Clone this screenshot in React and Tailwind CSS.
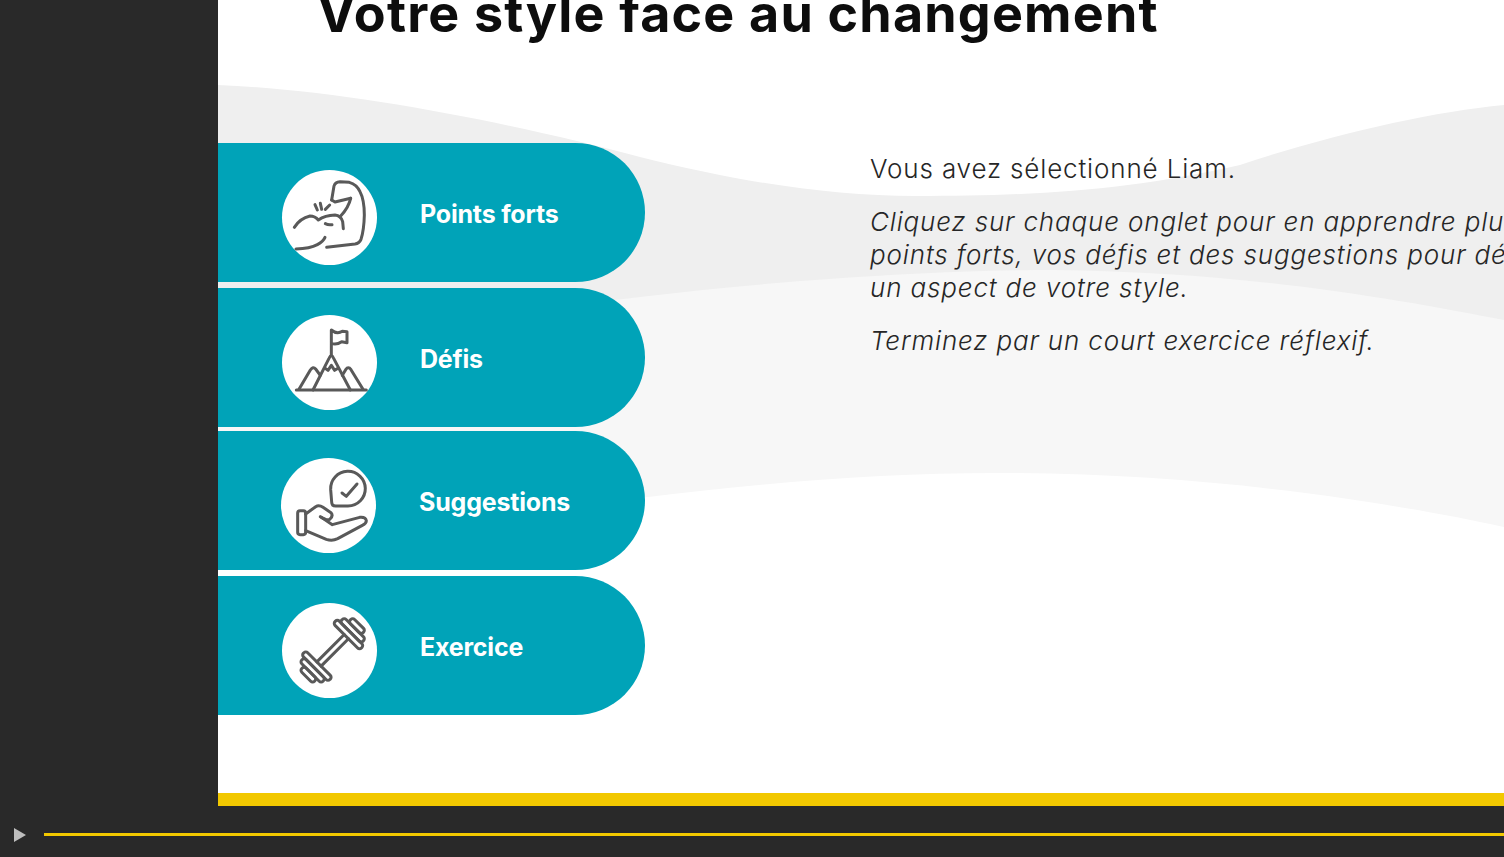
import React from "react";

const MuscleIcon = () => (
  <svg viewBox="66 60 285 285" className="w-full h-full" fill="none" stroke="#595959" strokeWidth="9" strokeLinecap="round" strokeLinejoin="round">
    <path d="M215 150 L222 108 Q225 96 240 95 L268 97 Q290 103 300 125 Q313 150 313 195 Q312 240 303 268 Q298 280 285 282 L200 292" />
    <path d="M215 150 L225 156 L272 145" />
    <path d="M272 145 Q266 172 242 198" />
    <path d="M103 232 Q120 205 150 198 Q165 198 175 210 Q195 196 225 195 Q243 197 248 215 L250 236" />
    <path d="M108 297 Q150 296 172 284 Q190 274 195 262" />
    <path d="M196 221 Q205 226 216 224" />
    <path d="M165 164 L172 180 M181 160 L185 178 M209 165 L196 178" />
  </svg>
);

const MountainIcon = () => (
  <svg viewBox="67 45 285 285" className="w-full h-full" fill="none" stroke="#595959" strokeWidth="9" strokeLinecap="round" strokeLinejoin="round">
    <path d="M110 270 L320 270" />
    <path d="M160 270 L208 175 Q215 160 222 175 L272 270" />
    <path d="M118 268 L152 210 Q160 198 168 207 L182 226" />
    <path d="M248 226 L258 209 Q266 198 274 209 L310 268" />
    <path d="M197 205 L205 211 L215 196 L225 211 L235 205" />
    <path d="M215 165 L215 90 Q232 104 248 94 L262 95 L262 128 L246 125 Q230 136 215 130" />
  </svg>
);

const HandIcon = () => (
  <svg viewBox="62 40 285 285" className="w-full h-full" fill="none" stroke="#595959" strokeWidth="9" strokeLinecap="round" strokeLinejoin="round">
    <path d="M211 135 A52 52 0 1 1 263 184 L226 184 Q214 184 214 172 Z" />
    <path d="M245 145 L258 155 L290 118" />
    <rect x="112" y="198" width="24" height="72" rx="7" />
    <path d="M136 208 L166 186 Q176 180 188 188 L212 204 Q220 214 208 224 Q200 228 180 216" />
    <path d="M183 218 L216 240 L298 218 Q316 216 318 228 Q318 236 306 242 L232 282 Q216 290 198 284 L136 258" />
  </svg>
);

const DumbbellIcon = () => (
  <svg viewBox="67 38 285 285" className="w-full h-full" fill="none" stroke="#595959" strokeWidth="9" strokeLinecap="round" strokeLinejoin="round">
    <g transform="translate(219 180) rotate(-45)">
      <path d="M-58 -9 L58 -9 M-58 9 L58 9" />
      {[1, -1].map((s) => (
        <g key={s} transform={`scale(${s} 1)`}>
          <rect x="58" y="-56" width="18" height="112" rx="8" />
          <rect x="76" y="-45" width="18" height="90" rx="8" />
          <rect x="94" y="-27" width="18" height="54" rx="8" />
        </g>
      ))}
    </g>
  </svg>
);

function Pill({ label, icon, className }) {
  return (
    <div className={`flex h-[139px] w-[427px] shrink-0 items-center rounded-r-[70px] bg-[#00a3b8] ${className}`}>
      <div className="mt-[10px] h-[95px] w-[95px] shrink-0 rounded-full bg-white">{icon}</div>
      <span className="ml-[43px] mt-[5px] text-[25px] font-bold tracking-[-0.2px] text-white">{label}</span>
    </div>
  );
}

export default function App() {
  return (
    <div className="flex h-[857px] w-[1504px] flex-col overflow-hidden bg-[#292929] font-['Inter',sans-serif]">
      <div className="flex h-[806px] shrink-0">
        <div className="w-[218px] shrink-0" />
        <div className="flex min-w-0 flex-1 flex-col">
          <div className="relative h-[793px] shrink-0 overflow-hidden bg-white">
            <svg viewBox="218 0 1286 793" className="absolute inset-0 h-full w-full">
              <path fill="#efefef" d="M218 85 C350 90 520 125 640 157 C740 182 830 196 915 196 C1040 196 1130 190 1240 165 C1330 135 1430 112 1504 105 L1504 793 L218 793 Z" />
              <path fill="#f7f7f7" d="M218 320 C400 320 520 312 640 297 C800 278 950 270 1053 270 C1250 272 1400 300 1504 320 L1504 793 L218 793 Z" />
              <path fill="#ffffff" d="M218 520 C400 520 520 514 640 498 C760 483 880 473 998 473 C1200 473 1380 500 1504 527 L1504 793 L218 793 Z" />
            </svg>
            <div className="relative flex h-[143px] items-end">
              <h1 className="mb-[101px] ml-[99px] whitespace-nowrap text-[52px] font-bold leading-[56px] tracking-[1.2px] text-[#0d0d0d]">
                Votre style face au changement
              </h1>
            </div>
            <div className="relative flex">
              <div className="flex flex-col">
                <Pill label="Points forts" icon={<MuscleIcon />} className="pl-[64px]" />
                <Pill label="Défis" icon={<MountainIcon />} className="mt-[6px] pl-[64px]" />
                <Pill label="Suggestions" icon={<HandIcon />} className="mt-[4px] pl-[63px]" />
                <Pill label="Exercice" icon={<DumbbellIcon />} className="mt-[6px] pl-[64px]" />
              </div>
              <div className="ml-[225px] flex flex-col gap-[20px] whitespace-nowrap pt-[9px] text-[26px] font-light leading-[33px] tracking-[0.85px] text-[#262626]">
                <p>Vous avez sélectionné Liam.</p>
                <p className="italic">
                  Cliquez sur chaque onglet pour en apprendre plus sur vos
                  <br />
                  points forts, vos défis et des suggestions pour développer
                  <br />
                  un aspect de votre style.
                </p>
                <p className="italic">Terminez par un court exercice réflexif.</p>
              </div>
            </div>
          </div>
          <div className="h-[13px] shrink-0 bg-[#f2c800]" />
        </div>
      </div>
      <div className="flex flex-1 items-center pl-[14px] pt-[6px]">
        <svg viewBox="0 0 12 14" className="h-[14px] w-[12px] shrink-0">
          <path d="M0 0 L12 7 L0 14 Z" fill="#bdbdbd" />
        </svg>
        <div className="ml-[18px] h-[3px] flex-1 bg-[#f2c800]" />
      </div>
    </div>
  );
}
